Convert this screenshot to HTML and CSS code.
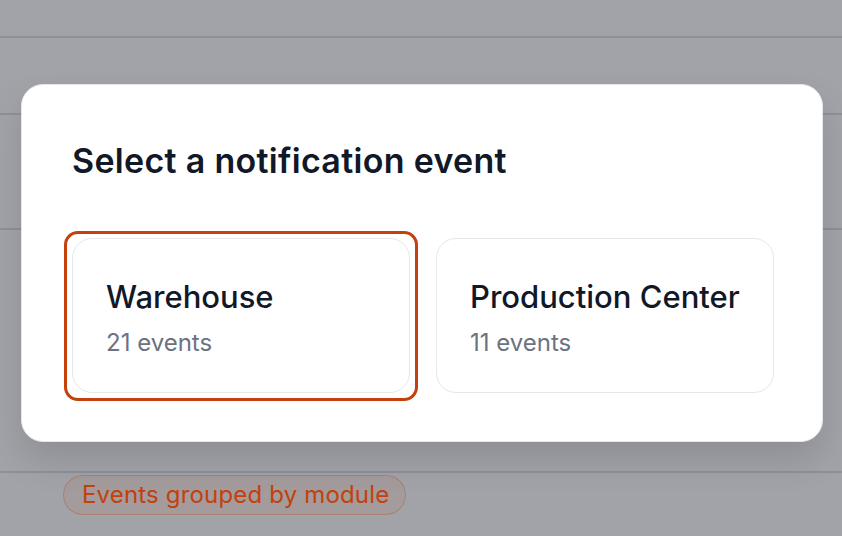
FILE: index.html
```html
<!DOCTYPE html>
<html lang="en">
<head>
    <meta charset="UTF-8">
    <meta name="viewport" content="width=device-width, initial-scale=1.0">
    <title>Notification events</title>
    <link rel="stylesheet" href="styles.css">
</head>
<body>
    <!-- Page behind the dialog -->
    <div class="page">
        <div class="row row-top"></div>
        <div class="row row-2"></div>
        <div class="row row-3"></div>
        <div class="row row-4"></div>
        <div class="row row-last">
            <span class="badge">Events grouped by module</span>
        </div>
    </div>

    <!-- Dialog -->
    <div class="modal">
        <h2 class="modal-title">Select a notification event</h2>
        <div class="options">
            <div class="option selected">
                <div class="option-name">Warehouse</div>
                <div class="option-count">21 events</div>
            </div>
            <div class="option">
                <div class="option-name">Production Center</div>
                <div class="option-count">11 events</div>
            </div>
        </div>
    </div>
</body>
</html>
```

FILE: styles.css
```css
body {
    margin: 0;
    padding: 0;
    font-family: Inter, "Noto Sans", sans-serif;
    background-color: #a1a3a9;
    overflow: hidden;
}

/* Dimmed page rows */
.page {
    height: 536px;
    display: flex;
    flex-direction: column;
}

.row {
    border-bottom: 2px solid #8d9095;
    box-sizing: border-box;
}

.row-top { height: 38px; }
.row-2 { height: 77px; }
.row-3 { height: 115px; }
.row-4 { height: 243px; }

.row-last {
    border-bottom: none;
    padding: 2px 0 0 63px;
}

.badge {
    display: inline-block;
    height: 40px;
    line-height: 38px;
    box-sizing: border-box;
    padding: 0 16px 0 18px;
    border: 1px solid rgba(194, 65, 12, 0.28);
    border-radius: 20px;
    background-color: rgba(194, 65, 12, 0.08);
    color: #c2410c;
    font-size: 24px;
    letter-spacing: 0.17px;
}

/* Dialog */
.modal {
    position: absolute;
    top: 84px;
    left: 21px;
    width: 802px;
    box-sizing: border-box;
    padding: 50px 50px 48px;
    background-color: white;
    border: 1px solid #e5e7eb;
    border-radius: 22px;
    box-shadow: 0 18px 36px rgba(0, 0, 0, 0.12);
}

.modal-title {
    margin: 6px 0 57px;
    font-size: 34px;
    line-height: 40px;
    font-weight: 600;
    color: #111827;
    letter-spacing: 0.3px;
}

.options {
    display: grid;
    grid-template-columns: 338px 338px;
    gap: 26px;
}

.option {
    position: relative;
    height: 155px;
    box-sizing: border-box;
    padding: 39px 30px 0 33px;
    border: 1px solid #e5e7eb;
    border-radius: 20px;
}

.option.selected::after {
    content: "";
    position: absolute;
    top: -8px;
    left: -9px;
    right: -9px;
    bottom: -9px;
    border: 3px solid #c2410c;
    border-radius: 14px;
}

.option-name {
    font-size: 31px;
    font-weight: 500;
    color: #111827;
    line-height: 38px;
    white-space: nowrap;
}

.option-count {
    margin-top: 13px;
    font-size: 24px;
    color: #6b7280;
    line-height: 28px;
}
```
